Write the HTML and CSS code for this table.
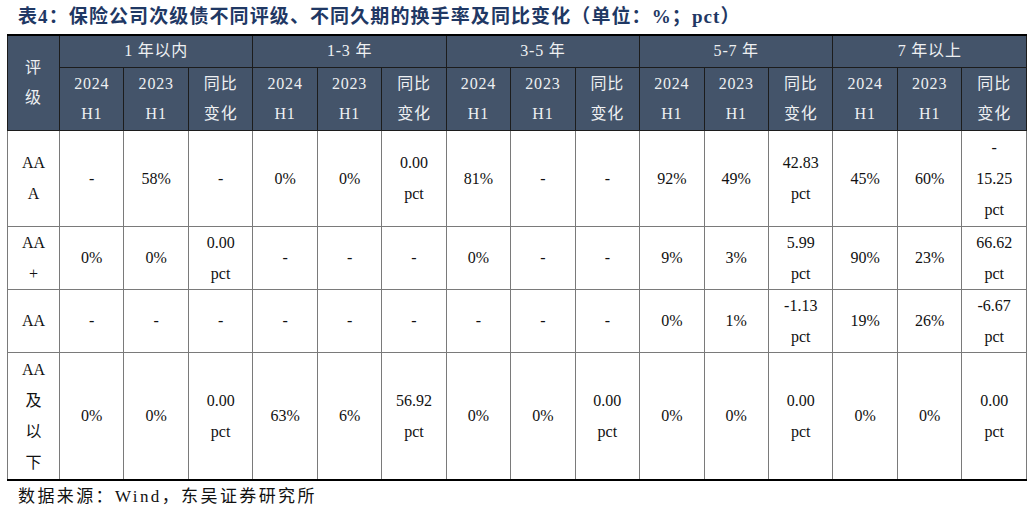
FILE: index.html
```html
<!DOCTYPE html>
<html lang="zh-CN">
<head>
<meta charset="utf-8">
<title>表4</title>
<link rel="stylesheet" href="styles.css">
</head>
<body>
<div class="page">
  <div class="title">表4：保险公司次级债不同评级、不同久期的换手率及同比变化（单位：%；pct）</div>
  <table class="grid">
    <colgroup>
      <col class="c-first">
      <col><col><col><col><col><col><col><col><col><col><col><col><col><col><col>
    </colgroup>
    <thead>
      <tr class="h1">
        <th rowspan="2">评<br>级</th>
        <th colspan="3">1 年以内</th>
        <th colspan="3">1-3 年</th>
        <th colspan="3">3-5 年</th>
        <th colspan="3">5-7 年</th>
        <th colspan="3">7 年以上</th>
      </tr>
      <tr class="h2">
        <th>2024<br>H1</th><th>2023<br>H1</th><th>同比<br>变化</th>
        <th>2024<br>H1</th><th>2023<br>H1</th><th>同比<br>变化</th>
        <th>2024<br>H1</th><th>2023<br>H1</th><th>同比<br>变化</th>
        <th>2024<br>H1</th><th>2023<br>H1</th><th>同比<br>变化</th>
        <th>2024<br>H1</th><th>2023<br>H1</th><th>同比<br>变化</th>
      </tr>
    </thead>
    <tbody>
      <tr class="r1">
        <td>AA<br>A</td>
        <td>-</td><td>58%</td><td>-</td>
        <td>0%</td><td>0%</td><td>0.00<br>pct</td>
        <td>81%</td><td>-</td><td>-</td>
        <td>92%</td><td>49%</td><td>42.83<br>pct</td>
        <td>45%</td><td>60%</td><td>-<br>15.25<br>pct</td>
      </tr>
      <tr class="r2">
        <td>AA<br>+</td>
        <td>0%</td><td>0%</td><td>0.00<br>pct</td>
        <td>-</td><td>-</td><td>-</td>
        <td>0%</td><td>-</td><td>-</td>
        <td>9%</td><td>3%</td><td>5.99<br>pct</td>
        <td>90%</td><td>23%</td><td>66.62<br>pct</td>
      </tr>
      <tr class="r3">
        <td>AA</td>
        <td>-</td><td>-</td><td>-</td>
        <td>-</td><td>-</td><td>-</td>
        <td>-</td><td>-</td><td>-</td>
        <td>0%</td><td>1%</td><td>-1.13<br>pct</td>
        <td>19%</td><td>26%</td><td>-6.67<br>pct</td>
      </tr>
      <tr class="r4">
        <td>AA<br>及<br>以<br>下</td>
        <td>0%</td><td>0%</td><td>0.00<br>pct</td>
        <td>63%</td><td>6%</td><td>56.92<br>pct</td>
        <td>0%</td><td>0%</td><td>0.00<br>pct</td>
        <td>0%</td><td>0%</td><td>0.00<br>pct</td>
        <td>0%</td><td>0%</td><td>0.00<br>pct</td>
      </tr>
    </tbody>
  </table>
  <div class="source">数据来源：Wind，东吴证券研究所</div>
</div>
</body>
</html>
```

FILE: styles.css
```css
html, body {
  margin: 0;
  padding: 0;
  background: #ffffff;
}

body {
  font-family: "Liberation Serif", "Times New Roman", "DejaVu Serif", "Noto Sans CJK SC", serif;
  color: #111111;
}

.page {
  width: 1020px;
  padding: 0 7px;
}

.title {
  height: 34px;
  line-height: 34px;
  padding-left: 11px;
  font-size: 19px;
  font-weight: bold;
  letter-spacing: 1.1px;
  color: #1f3864;
  white-space: nowrap;
}

.grid {
  width: 1020px;
  table-layout: fixed;
  border-collapse: collapse;
  border-top: 2px solid #000000;
  border-bottom: 2px solid #000000;
  font-size: 16px;
}

.c-first {
  width: 52px;
}

.grid th {
  background: #44546a;
  color: #eef0f2;
  font-weight: normal;
  border: 1px solid #1c1c1c;
  padding: 0;
  line-height: 30px;
  letter-spacing: 0.8px;
  text-align: center;
  vertical-align: middle;
}

.grid .h1 {
  height: 32px;
}

.grid .h2 {
  height: 63px;
}

.grid td {
  border: 1px solid #7a7a7a;
  padding: 0;
  line-height: 31px;
  text-align: center;
  vertical-align: middle;
}

.grid .r1 { height: 96px; }
.grid .r2 { height: 62px; }
.grid .r3 { height: 63px; }
.grid .r4 { height: 128px; }

.source {
  height: 32px;
  line-height: 32px;
  padding-left: 11px;
  font-size: 17px;
  letter-spacing: 2.4px;
  color: #111111;
  white-space: nowrap;
}
```
